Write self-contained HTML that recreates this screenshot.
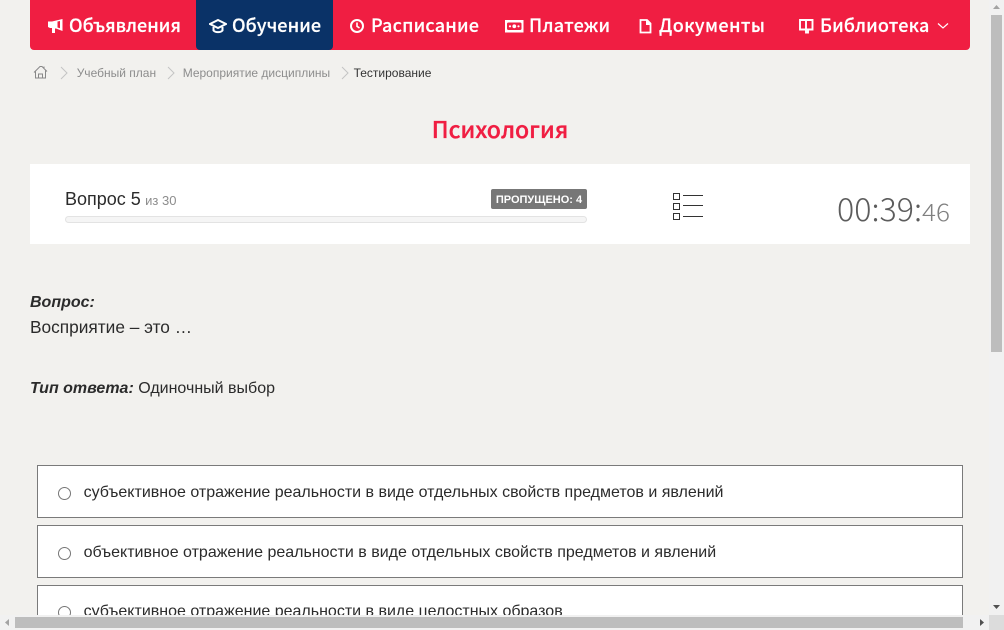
<!DOCTYPE html>
<html lang="ru"><head><meta charset="utf-8"><title>Психология</title>
<style>
html,body{margin:0;padding:0;width:1004px;height:630px;overflow:hidden;background:#f2f1ee}
body{position:relative;font-family:"Liberation Sans",sans-serif;color:#2b2b2b}
.a{position:absolute;white-space:nowrap}
.n{font-family:"Noto Sans CJK SC","Liberation Sans",sans-serif;font-weight:500;font-size:18px;color:#fff;line-height:26px;top:12px;-webkit-text-stroke:.2px #fff}
.ic{position:absolute}
.bc{font-size:12px;color:#8d8d8d;top:66px;line-height:14px}
.opt{position:absolute;left:37px;width:924px;height:51px;background:#fff;border:1px solid #7a7a7a}
.opt span{position:absolute;left:45.6px;top:17px;font-size:16px;line-height:20px;color:#2b2b2b;white-space:nowrap}
.opt i{position:absolute;left:20px;top:21px;width:11px;height:11px;border:1px solid #767676;border-radius:50%;background:#fff}
</style></head><body>
<div class="a" style="left:30px;top:0;width:940px;height:50px;background:#f01e42;border-radius:0 0 4px 4px"></div>
<div class="a" style="left:196px;top:0;width:137px;height:50px;background:#0a3267;border-radius:0 0 4px 4px"></div>

<svg class="ic" style="left:47px;top:18px" width="17" height="16" viewBox="0 0 17 16"><path d="M1 3.5 H5 L15.5 1 V13 L9 10.5 H8 V15 H5 V10 H3 L1 9Z" fill="#fff"/><path d="M10.5 3.5 V9.5 L13 10.3 V3Z" fill="#f01e42"/></svg>
<div class="a n" style="left:69px">Объявления</div>

<svg class="ic" style="left:209px;top:18px" width="18" height="16" viewBox="0 0 18 16"><path d="M9 2 L17 6 L9 10 L1 6Z M4.5 9 V12.5 C6.5 14.7 11.5 14.7 13.5 12.5 V9" fill="none" stroke="#fff" stroke-width="2"/></svg>
<div class="a n" style="left:232px;letter-spacing:.1px">Обучение</div>

<svg class="ic" style="left:349px;top:18px" width="16" height="16" viewBox="0 0 16 16"><circle cx="8" cy="8" r="6" fill="none" stroke="#fff" stroke-width="2"/><path d="M8 4.5 V8.3 L10.5 10" fill="none" stroke="#fff" stroke-width="1.6"/></svg>
<div class="a n" style="left:371px;letter-spacing:.2px">Расписание</div>

<svg class="ic" style="left:505px;top:20px" width="19" height="13" viewBox="0 0 19 13"><rect x="0" y="0" width="18.5" height="12.5" fill="#fff"/><rect x="2" y="2.5" width="14.5" height="7.5" rx="1.5" fill="#f01e42"/><circle cx="9.3" cy="6.3" r="1.9" fill="#fff"/><circle cx="5" cy="6.3" r="1.1" fill="#fff"/><circle cx="13.5" cy="6.3" r="1.1" fill="#fff"/></svg>
<div class="a n" style="left:529px;letter-spacing:.28px">Платежи</div>

<svg class="ic" style="left:639px;top:19px" width="13" height="15" viewBox="0 0 13 15"><path d="M1.5 1 H8 L11.5 4.5 V13.5 H1.5Z" fill="none" stroke="#fff" stroke-width="1.8"/><path d="M7 1 V6 H12Z" fill="#fff"/></svg>
<div class="a n" style="left:659px;letter-spacing:.42px">Документы</div>

<svg class="ic" style="left:798px;top:18px" width="16" height="16" viewBox="0 0 16 16"><path d="M2 2 H8 V11.5 H2Z M8 2 H14.5 V11.5 H8 M8 11 V14.5 H10 V11.5" fill="none" stroke="#fff" stroke-width="1.9"/></svg>
<div class="a n" style="left:820px;letter-spacing:.2px">Библиотека</div>
<svg class="ic" style="left:937px;top:22px" width="12" height="8" viewBox="0 0 12 8"><path d="M1 1.5 L6 6 L11 1.5" fill="none" stroke="#fff" stroke-width="1.2"/></svg>

<svg class="ic" style="left:33px;top:65px" width="15" height="14" viewBox="0 0 15 14"><path d="M1 7.5 L7 1.5 H9 L14 6.5 M2.5 6.5 V13 H12.5 V5.5 M5.5 13 V9 H9.5 V13 M11 3 V1.5" fill="none" stroke="#888" stroke-width="1"/></svg>
<svg class="ic" style="left:60px;top:66px" width="8" height="14" viewBox="0 0 8 14"><path d="M1 1 L7 7 L1 13" fill="none" stroke="#c4c4c4"/></svg>
<div class="a bc" style="left:76.7px">Учебный план</div>
<svg class="ic" style="left:167px;top:66px" width="8" height="14" viewBox="0 0 8 14"><path d="M1 1 L7 7 L1 13" fill="none" stroke="#c4c4c4"/></svg>
<div class="a bc" style="left:182.7px">Мероприятие дисциплины</div>
<svg class="ic" style="left:341px;top:66px" width="8" height="14" viewBox="0 0 8 14"><path d="M1 1 L7 7 L1 13" fill="none" stroke="#c4c4c4"/></svg>
<div class="a bc" style="left:353.6px;color:#333">Тестирование</div>

<div class="a" style="left:30px;width:940px;top:112px;text-align:center;font-family:'Noto Sans CJK SC','Liberation Sans',sans-serif;font-weight:500;font-size:23px;line-height:32px;color:#f01e42;-webkit-text-stroke:.35px #f01e42">Психология</div>

<div class="a" style="left:30px;top:164px;width:940px;height:80px;background:#fff"></div>
<div class="a" style="left:65px;top:187px;font-size:18px;line-height:24px;color:#2b2b2b">Вопрос 5 <span style="font-size:13px;color:#8d8d8d;margin-left:-.7px">из 30</span></div>
<div class="a" style="left:491px;top:189px;width:96px;height:20px;background:#777;border-radius:2px;color:#fff;font-weight:bold;font-size:11px;line-height:22px;text-align:center">ПРОПУЩЕНО: 4</div>
<div class="a" style="left:65px;top:216px;width:520px;height:5px;background:#f5f5f5;border:1px solid #e3e3e3;border-radius:4px"></div>

<svg class="ic" style="left:672px;top:192px" width="32" height="30" viewBox="0 0 32 30"><g fill="none" stroke="#333" stroke-width="1"><rect x="1.5" y="1.5" width="6" height="6"/><rect x="1.5" y="11.5" width="6" height="6"/><rect x="1.5" y="21.5" width="6" height="6"/><path d="M11 3.5 H31 M11 13.5 H31 M11 24.5 H31"/></g></svg>

<div class="a" style="left:837px;top:188px;line-height:42px"><svg width="115" height="42" style="display:block"><text x="0" y="33" font-family="Noto Sans CJK SC, Liberation Sans, sans-serif" font-weight="300" font-size="32" fill="#5c5c5c" textLength="85" lengthAdjust="spacingAndGlyphs">00:39:</text><text x="85" y="33" font-family="Noto Sans CJK SC, Liberation Sans, sans-serif" font-weight="300" font-size="24" fill="#808080" textLength="28" lengthAdjust="spacingAndGlyphs">46</text></svg></div>

<div class="a" style="left:30px;top:293px;font-size:16px;line-height:20px;font-weight:bold;font-style:italic">Вопрос:</div>
<div class="a" style="left:30px;top:317px;font-size:17.3px;line-height:20px">Восприятие – это …</div>
<div class="a" style="left:30px;top:379px;font-size:16px;line-height:20px"><b><i>Тип ответа:</i></b> Одиночный выбор</div>

<div class="opt" style="top:465px"><i></i><span>субъективное отражение реальности в виде отдельных свойств предметов и явлений</span></div>
<div class="opt" style="top:525px"><i></i><span>объективное отражение реальности в виде отдельных свойств предметов и явлений</span></div>
<div class="opt" style="top:585px"><i style="top:20px"></i><span style="top:16px">субъективное отражение реальности в виде целостных образов</span></div>

<!-- scrollbars -->
<div class="a" style="left:989px;top:0;width:15px;height:630px;background:#f1f1f1"></div>
<div class="a" style="left:0;top:615px;width:1004px;height:15px;background:#f1f1f1"></div>
<div class="a" style="left:989px;top:615px;width:15px;height:15px;background:#dcdcdc"></div>
<div class="a" style="left:991px;top:15px;width:11px;height:337px;background:#bdbdbd"></div>
<div class="a" style="left:15px;top:617px;width:948px;height:11px;background:#bdbdbd"></div>
<svg class="ic" style="left:992px;top:4px" width="9" height="6"><path d="M4.5 1 L8 5 H1Z" fill="#a3a3a3"/></svg>
<svg class="ic" style="left:992px;top:604px" width="9" height="6"><path d="M1 1 H8 L4.5 5Z" fill="#505050"/></svg>
<svg class="ic" style="left:4px;top:618px" width="6" height="9"><path d="M5 1 V8 L1 4.5Z" fill="#a3a3a3"/></svg>
<svg class="ic" style="left:979px;top:618px" width="6" height="9"><path d="M1 1 V8 L5 4.5Z" fill="#505050"/></svg>
</body></html>
